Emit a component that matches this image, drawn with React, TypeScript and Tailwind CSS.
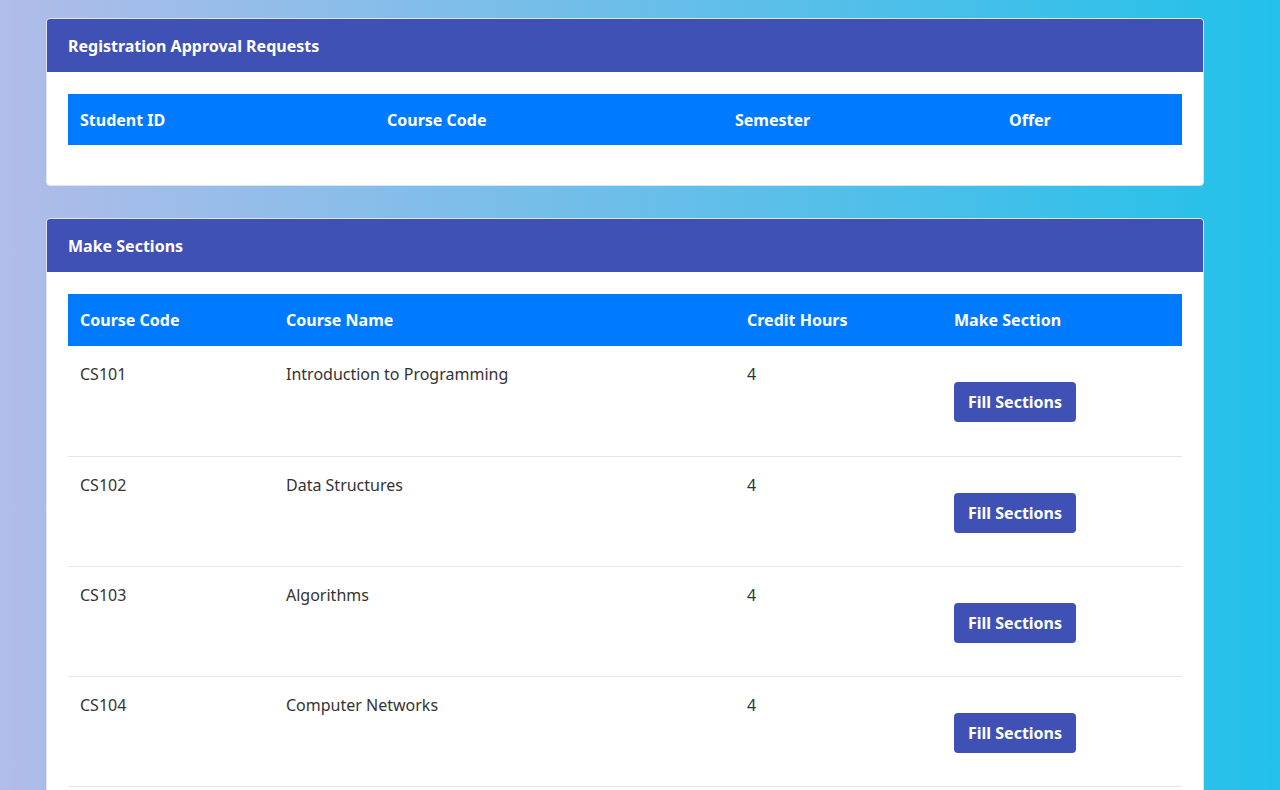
import React from "react";

const courses = [
  { code: "CS101", name: "Introduction to Programming", hours: 4 },
  { code: "CS102", name: "Data Structures", hours: 4 },
  { code: "CS103", name: "Algorithms", hours: 4 },
  { code: "CS104", name: "Computer Networks", hours: 4 },
];

export default function App() {
  return (
    <div
      className="min-h-[790px] bg-[linear-gradient(to_right,#b1bce9,#22c1e9)] pt-[18px] pb-10 pl-[46px] pr-[76px]"
      style={{ fontFamily: '"Noto Sans", "Open Sans", sans-serif' }}
    >
      <div className="rounded-[4px] border border-[#dfe3ea] bg-white overflow-hidden">
        <div className="h-[53px] bg-[#3f51b5] px-[21px] flex items-center">
          <h2 className="text-[16px] font-bold text-white">Registration Approval Requests</h2>
        </div>
        <div className="px-[21px] pt-[22px] pb-[40px]">
          <table className="w-full border-collapse text-[16px]">
            <thead>
              <tr className="bg-[#007bff] h-[51px] text-white font-bold text-left">
                <th className="w-[307px] px-3">Student ID</th>
                <th className="w-[348px] px-3">Course Code</th>
                <th className="w-[274px] px-3">Semester</th>
                <th className="px-3">Offer</th>
              </tr>
            </thead>
          </table>
        </div>
      </div>

      <div className="mt-[32px] rounded-[4px] border border-[#dfe3ea] bg-white overflow-hidden">
        <div className="h-[53px] bg-[#3f51b5] px-[21px] flex items-center">
          <h2 className="text-[16px] font-bold text-white">Make Sections</h2>
        </div>
        <div className="px-[21px] pt-[22px] pb-[40px]">
          <table className="w-full border-collapse text-[16px]">
            <thead>
              <tr className="bg-[#007bff] h-[52px] text-white font-bold text-left">
                <th className="w-[206px] px-3">Course Code</th>
                <th className="w-[461px] px-3">Course Name</th>
                <th className="w-[207px] px-3">Credit Hours</th>
                <th className="px-3">Make Section</th>
              </tr>
            </thead>
            <tbody className="text-[#333333]">
              {courses.map((c) => (
                <tr key={c.code} className="h-[110px] border-b border-[#e3e6ea] align-top">
                  <td className="px-3 pt-[16px] leading-6">{c.code}</td>
                  <td className="px-3 pt-[16px] leading-6">{c.name}</td>
                  <td className="px-3 pt-[16px] leading-6">{c.hours}</td>
                  <td className="px-3 pt-[36px]">
                    <button className="h-[40px] rounded-[4px] bg-[#3f51b5] px-[14px] text-[16px] font-bold text-white">
                      Fill Sections
                    </button>
                  </td>
                </tr>
              ))}
            </tbody>
          </table>
        </div>
      </div>
    </div>
  );
}
